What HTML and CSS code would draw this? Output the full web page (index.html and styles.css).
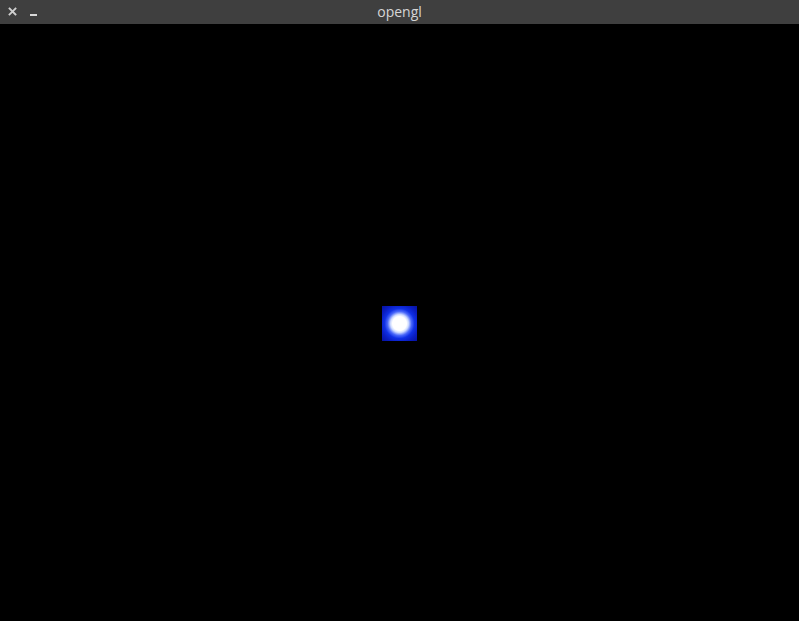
FILE: index.html
```html
<!DOCTYPE html>
<html>
<head>
<meta charset="utf-8">
<link rel="stylesheet" href="styles.css">
</head>
<body>
<div class="window">
  <div class="titlebar">
    <div class="controls">
      <svg class="btn" width="9" height="9" viewBox="0 0 9 9"><path d="M1.5 1.5 L7.5 7.5 M7.5 1.5 L1.5 7.5" stroke="#cfcfcf" stroke-width="1.8" stroke-linecap="square"/></svg>
      <svg class="btn" width="9" height="9" viewBox="0 0 9 9"><rect x="1" y="7" width="7" height="2" fill="#d8d8d8"/></svg>
    </div>
    <div class="title">opengl</div>
  </div>
  <div class="canvas">
    <div class="sprite"></div>
  </div>
</div>
</body>
</html>
```
FILE: styles.css
```css
html, body {
  margin: 0;
  padding: 0;
  background: #000;
}
.window {
  width: 799px;
  height: 621px;
  display: flex;
  flex-direction: column;
}
.titlebar {
  height: 24px;
  background: #3f3f3f;
  display: flex;
  align-items: center;
  justify-content: center;
  position: relative;
  flex: none;
}
.controls {
  position: absolute;
  left: 8px;
  top: 7px;
  display: flex;
  gap: 12px;
}
.btn {
  display: block;
}
.title {
  font-family: "Open Sans", "DejaVu Sans", sans-serif;
  font-size: 14px;
  color: #d6d6d6;
  line-height: 24px;
}
.canvas {
  flex: 1;
  background: #000;
  display: flex;
  align-items: center;
  justify-content: center;
  padding-top: 1px;
}
.sprite {
  width: 35px;
  height: 35px;
  background: radial-gradient(circle at 50% 50%, #ffffff 0, #ffffff 7px, #d0dcff 9px, #4a68fa 12px, #1030e6 15px, #0a1ec4 19px, #06109e 25px);
}
```
